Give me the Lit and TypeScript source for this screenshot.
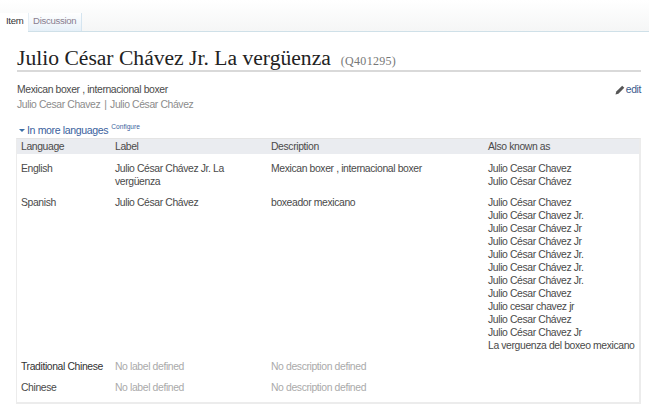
import { LitElement, html, css } from "lit";
import { customElement } from "lit/decorators.js";

const rows = [
  { lang: "English", label: "Julio César Chávez Jr. La vergüenza", desc: "Mexican boxer , internacional boxer", aliases: ["Julio Cesar Chavez", "Julio César Chávez"] },
  {
    lang: "Spanish", label: "Julio César Chávez", desc: "boxeador mexicano",
    aliases: ["Julio César Chavez", "Julio César Chavez Jr.", "Julio Cesar Chávez Jr", "Julio César Chávez Jr", "Julio César Chávez Jr.", "Julio Cesar Chávez Jr.", "Julio César Chávez Jr.", "Julio Cesar Chavez", "Julio cesar chavez jr", "Julio Cesar Chávez", "Julio César Chavez Jr", "La verguenza del boxeo mexicano"],
  },
  { lang: "Traditional Chinese", label: "", desc: "", aliases: [] },
  { lang: "Chinese", label: "", desc: "", aliases: [] },
];

@customElement("app-root")
export class AppRoot extends LitElement {
  static styles = css`
    :host { display: block; width: 649px; height: 406px; overflow: hidden; background: #fff; font-family: "Liberation Sans", Arial, sans-serif; font-size: 10.4px; letter-spacing: -0.38px; color: #4a4a4a; }
    .tabs { display: flex; height: 18px; padding-top: 13px; background: linear-gradient(#fff, #f5f6f6); border-bottom: 1px solid #cfe0e8; }
    .tab { line-height: 15px; font-size: 9.6px; letter-spacing: -0.3px; }
    .tab.on { background: #fff; color: #333; width: 22px; padding: 0 0 0 6px; margin-bottom: -1px; }
    .tab.off { color: #8a7f90; background: linear-gradient(#fff, #e6f0f8); border-left: 1px solid #e4eef5; border-right: 1px solid #d5e5f0; padding: 0 4px 0 4px; width: 44px; }
    .title { margin: 12px 8px 0 17px; height: 24px; padding-bottom: 2px; border-bottom: 2px solid #d9d9d9; display: flex; align-items: baseline; font-family: "Liberation Serif", serif; color: #222; white-space: nowrap; letter-spacing: 0; }
    .title h1 { margin: 0; font-weight: 400; font-size: 21.6px; line-height: 28px; }
    .title span { margin-left: 10px; font-size: 12px; color: #777; letter-spacing: 0.3px; }
    .summary { display: flex; justify-content: space-between; margin: 11px 8px 0 17px; line-height: 14px; }
    .summary .desc { color: #4a4a4a; }
    .summary .alts { color: #8c8c8c; margin-top: 1px; }
    .summary .sep { margin: 0 1px 0 1.5px; }
    .edit { display: flex; align-items: center; gap: 1px; height: 14px; color: #3a5a8c; }
    .more { margin: 11px 0 1px 19px; height: 14px; line-height: 14px; color: #3a5f9e; display: flex; align-items: baseline; font-size: 10.6px; letter-spacing: -0.38px; }
    .more .arrow { width: 0; height: 0; border: 3px solid transparent; border-top: 3px solid #3a6ea8; border-bottom: 0; margin-right: 2px; align-self: center; }
    .more sup { font-size: 6.6px; letter-spacing: 0; margin-left: 3px; position: relative; top: -5px; color: #3a5f9e; }
    .table { margin: 0 8px 0 16px; height: 266px; box-sizing: border-box; border: 2px solid #ececec; border-top: 1px solid #e4e4e4; border-left-width: 1px; display: grid; grid-template-columns: 94px 156px 217px 1fr; grid-auto-rows: min-content; line-height: 13px; }
    .head { background: #eaecf0; height: 15px; line-height: 15px; color: #4a4a4a; padding-left: 4px; }
    .cell { padding: 8px 0 0 4px; }
    .none { color: #aaa; }
    .trad { white-space: nowrap; color: #333; }
  `;

  private cell(text: string, emptyText: string) {
    return html`<div class="cell ${text ? "" : "none"}">${text || emptyText}</div>`;
  }

  render() {
    return html`
      <div class="tabs">
        <div class="tab on">Item</div>
        <div class="tab off">Discussion</div>
      </div>
      <div class="title"><h1>Julio César Chávez Jr. La vergüenza</h1><span>(Q401295)</span></div>
      <div class="summary">
        <div>
          <div class="desc">Mexican boxer , internacional boxer</div>
          <div class="alts">Julio Cesar Chavez <span class="sep">|</span> Julio César Chávez</div>
        </div>
        <div class="edit">
          <svg width="10" height="10" viewBox="0 0 10 10"><path d="M0.5 9.5 L1.3 6.6 L7.2 0.7 L9.3 2.8 L3.4 8.7 Z" fill="#555"/></svg>
          <span>edit</span>
        </div>
      </div>
      <div class="more"><i class="arrow"></i>In more languages<sup>Configure</sup></div>
      <div class="table">
        <div class="head">Language</div><div class="head">Label</div><div class="head">Description</div><div class="head">Also known as</div>
        ${rows.map((r, i) => html`
            <div class="cell ${i === 2 ? "trad" : ""}">${r.lang}</div>
            ${this.cell(r.label, "No label defined")}
            ${this.cell(r.desc, "No description defined")}
            <div class="cell">${r.aliases.map((a) => html`<div>${a}</div>`)}</div>
          `)}
      </div>
    `;
  }
}
